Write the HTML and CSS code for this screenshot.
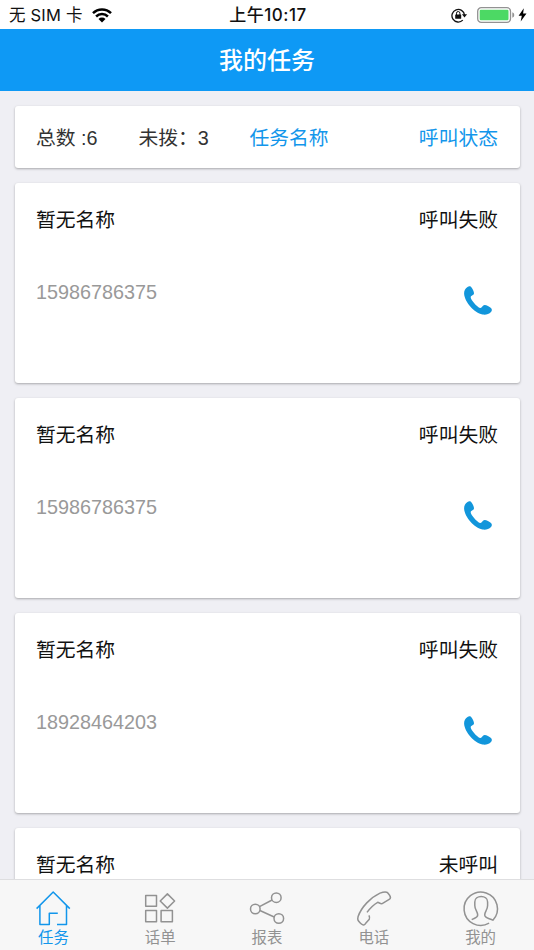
FILE: index.html
```html
<!DOCTYPE html>
<html lang="zh-CN">
<head>
  <meta charset="UTF-8" />
  <meta name="viewport" content="width=device-width, initial-scale=1.0"/>
  <title>我的任务</title>
  <link rel="stylesheet" href="styles.css">
</head>
<body>
  <div class="status-bar">
    <div class="status-left">
      <span>无 SIM 卡</span>
      <svg class="wifi" width="20" height="15" viewBox="0 0 20 15">
        <g fill="none" stroke="#000" stroke-width="2.5">
          <path d="M1 5.2 A12.8 12.8 0 0 1 19 5.2"/>
          <path d="M4.1 8.5 A8.4 8.4 0 0 1 15.9 8.5"/>
        </g>
        <path d="M6.5 11 A5 5 0 0 1 13.5 11 L10 14.6 Z"/>
      </svg>
    </div>
    <div class="status-time">上午10:17</div>
    <div class="status-right">
      <svg width="17" height="15" viewBox="0 0 17 15">
        <path d="M11.8 12.1 A6.3 6.3 0 1 1 13.5 7" fill="none" stroke="#111" stroke-width="1.3"/>
        <path d="M10.9 6.3 H16.1 L13.5 9.4 Z" fill="#111"/>
        <rect x="4.2" y="6.4" width="6" height="4.4" rx=".5" fill="#111"/>
        <path d="M5.5 7 V5.2 A1.7 1.7 0 0 1 8.9 5.2 V7" fill="none" stroke="#111" stroke-width="1"/>
      </svg>
      <svg class="battery" width="38" height="16" viewBox="0 0 38 16">
        <rect x=".7" y=".7" width="32.8" height="14.6" rx="3.6" fill="#fff" stroke="#929292" stroke-width="1.3"/>
        <rect x="2.7" y="2.7" width="28.8" height="10.6" rx="1.2" fill="#4cd964"/>
        <path d="M35.3 5.3 Q37.3 6 37.3 8 Q37.3 10 35.3 10.7 Z" fill="#929292"/>
      </svg>
      <svg class="bolt" width="9" height="14" viewBox="0 0 9 14">
        <path d="M5.8 .3 L.6 7.8 H3.8 L2.7 13.5 L8.5 5.6 H5.1 Z"/>
      </svg>
    </div>
  </div>

  <header>
    <h1>我的任务</h1>
  </header>

  <main>
    <section class="card summary">
      <span class="total">总数 :6</span>
      <span class="pending">未拨：3</span>
      <a class="task-name">任务名称</a>
      <a class="call-state">呼叫状态</a>
    </section>

    <section class="card task">
      <div class="task-head"><span>暂无名称</span><span>呼叫失败</span></div>
      <div class="task-body">
        <span class="number">15986786375</span>
        <svg class="call" viewBox="0 0 28 29"><use href="#phone"/></svg>
      </div>
    </section>

    <section class="card task">
      <div class="task-head"><span>暂无名称</span><span>呼叫失败</span></div>
      <div class="task-body">
        <span class="number">15986786375</span>
        <svg class="call" viewBox="0 0 28 29"><use href="#phone"/></svg>
      </div>
    </section>

    <section class="card task">
      <div class="task-head"><span>暂无名称</span><span>呼叫失败</span></div>
      <div class="task-body">
        <span class="number">18928464203</span>
        <svg class="call" viewBox="0 0 28 29"><use href="#phone"/></svg>
      </div>
    </section>

    <section class="card task">
      <div class="task-head"><span>暂无名称</span><span>未呼叫</span></div>
    </section>
  </main>

  <nav>
    <a class="tab active">
      <svg viewBox="0 0 36 36">
        <path d="M1.6 18.6 L18.2 2 L34.8 18.6 M4.9 15.6 V34.4 H14.3 V23.2 H22.8 M31.5 15.6 V34.4 H22"/>
      </svg>
      <span>任务</span>
    </a>
    <a class="tab">
      <svg viewBox="0 0 36 36">
        <path d="M3.7 5.5 H14.5 V16.3 H3.7 Z M3.7 20.5 H14.5 V31.8 H3.7 Z M19.1 20.5 H30.4 V31.8 H19.1 Z M25.4 3.9 L32.6 11 L25.4 18.1 L18.2 11 Z"/>
      </svg>
      <span>话单</span>
    </a>
    <a class="tab">
      <svg viewBox="0 0 36 36">
        <circle cx="6.3" cy="19" r="4.8"/>
        <circle cx="27.3" cy="7.7" r="4.8"/>
        <circle cx="29.8" cy="28.5" r="4.8"/>
        <path d="M10.5 16.7 L23.1 10 M10.9 20.5 L25.2 27"/>
      </svg>
      <span>报表</span>
    </a>
    <a class="tab">
      <svg viewBox="0 0 36 36">
        <path d="M11 22.4 C14 18.2 17.5 14.7 21.7 12.3 C23.2 12.6 24.5 14.2 26.2 13.6 L33.6 9.2 C35.4 8 34.4 6.6 33.4 5 L31.6 2.7 C29.8 1.2 26.5 2.2 24 3.1 C14.5 7.5 5.5 17 2.1 26.5 C1.1 30 2.3 31.2 4.5 33.3 C6.5 35.2 8.3 35.6 9.5 33.6 L13.3 29.2 C14.1 27.6 13.4 26.3 12.9 25.4"/>
      </svg>
      <span>电话</span>
    </a>
    <a class="tab">
      <svg viewBox="0 0 36 36">
        <path d="M26.1 33.2 A16.7 16.7 0 1 1 29.9 30.2 C26.5 28.2 21.7 28.3 21.7 25 C21.7 21.5 24.6 20 24.6 15.5 V12 C24.6 4.8 11.8 4.8 11.8 12 V15.5 C11.8 20 14.7 21.5 14.7 25 C14.7 27.7 11.8 27.9 8.7 29.6"/>
      </svg>
      <span>我的</span>
    </a>
  </nav>

  <svg class="symbols">
    <symbol id="phone" viewBox="0 0 28 29">
      <path d="M3.5 .9 C5.2 -.1 6.6 .1 7.7 1.8 C8.8 3.5 10 5.8 10 7.3 C10 9.3 6.9 9.5 6.7 11.2 C6.6 13.8 13.2 21.2 16.1 22 C18 22.5 18.4 19.2 20.6 19.1 C22.3 19 25.4 20.6 27 22 C28.2 23.2 28.1 24.8 27 26 C24.8 28.4 21.5 29 18.4 28.5 C10.5 27.1 .8 16.4 .1 7.8 C0 5 1.1 2.4 3.5 .9 Z" fill="#1296db"/>
    </symbol>
  </svg>
</body>
</html>
```

FILE: styles.css
```css
/* Base Styles */
* {
  box-sizing: border-box;
}

body {
  font-family: 'Liberation Sans', 'Noto Sans CJK SC', sans-serif;
  font-size: 19.8px;
  background-color: #efeff4;
  color: #111;
  margin: 0;
  height: 950px;
  display: flex;
  flex-direction: column;
  overflow: hidden;
}

.status-bar {
  flex: none;
  height: 29px;
  padding: 0 7px 0 9px;
  background-color: #fff;
  display: grid;
  grid-template-columns: 1fr auto 1fr;
  align-items: center;
  font-family: Inter, 'Noto Sans CJK SC', sans-serif;
  font-size: 16.5px;
  line-height: 29px;
}

.status-left,
.status-right {
  display: flex;
  align-items: center;
}

.status-left {
  gap: 9px;
  letter-spacing: 0.2px;
}

.status-right {
  justify-content: flex-end;
}

.status-time {
  font-size: 17px;
  font-weight: 500;
  letter-spacing: 0.5px;
  padding-top: 1px;
}

.battery {
  margin-left: 9px;
}

.bolt {
  margin-left: 3px;
}

header {
  flex: none;
  height: 62px;
  background-color: #0e99f5;
  color: #fff;
  text-align: center;
}

header h1 {
  margin: 0;
  font-size: 24px;
  font-weight: 500;
  line-height: 64px;
}

main {
  flex: 1;
  min-height: 0;
  padding: 14.5px 14.5px 0;
  display: flex;
  flex-direction: column;
  gap: 14.5px;
  overflow: hidden;
}

.card {
  flex: none;
  background-color: #fff;
  border-radius: 3px;
  box-shadow: 0 1px 2.5px rgba(0, 0, 0, 0.3);
  padding: 0 21.5px;
}

.summary {
  height: 62.5px;
  display: grid;
  grid-template-columns: 102.5px 111px 1fr auto;
  align-items: center;
  color: #333;
}

.summary a {
  color: #1296eb;
}

.task {
  height: 200.5px;
}

.task-head {
  display: flex;
  justify-content: space-between;
  line-height: 30px;
  padding-top: 22px;
}

.task-body {
  display: flex;
  justify-content: space-between;
  padding: 42px 6px 0 0;
}

.number {
  color: #999;
  line-height: 30px;
}

.call {
  width: 28px;
  height: 29px;
  margin-top: 9px;
}

/* Bottom tabs */
nav {
  flex: none;
  height: 71px;
  background-color: #f7f7f7;
  border-top: 1px solid #dedee0;
  display: grid;
  grid-template-columns: repeat(5, 1fr);
}

.tab {
  display: flex;
  flex-direction: column;
  align-items: center;
  gap: 1px;
  padding-top: 10px;
  color: #929292;
  font-size: 15.4px;
  line-height: 21px;
}

.tab svg {
  width: 36px;
  height: 36px;
  fill: none;
  stroke: #929292;
  stroke-width: 1.5;
  stroke-linejoin: round;
  overflow: visible;
}

.tab.active {
  color: #1296eb;
}

.tab.active svg {
  stroke: #1296eb;
}

.symbols {
  display: none;
}
```
